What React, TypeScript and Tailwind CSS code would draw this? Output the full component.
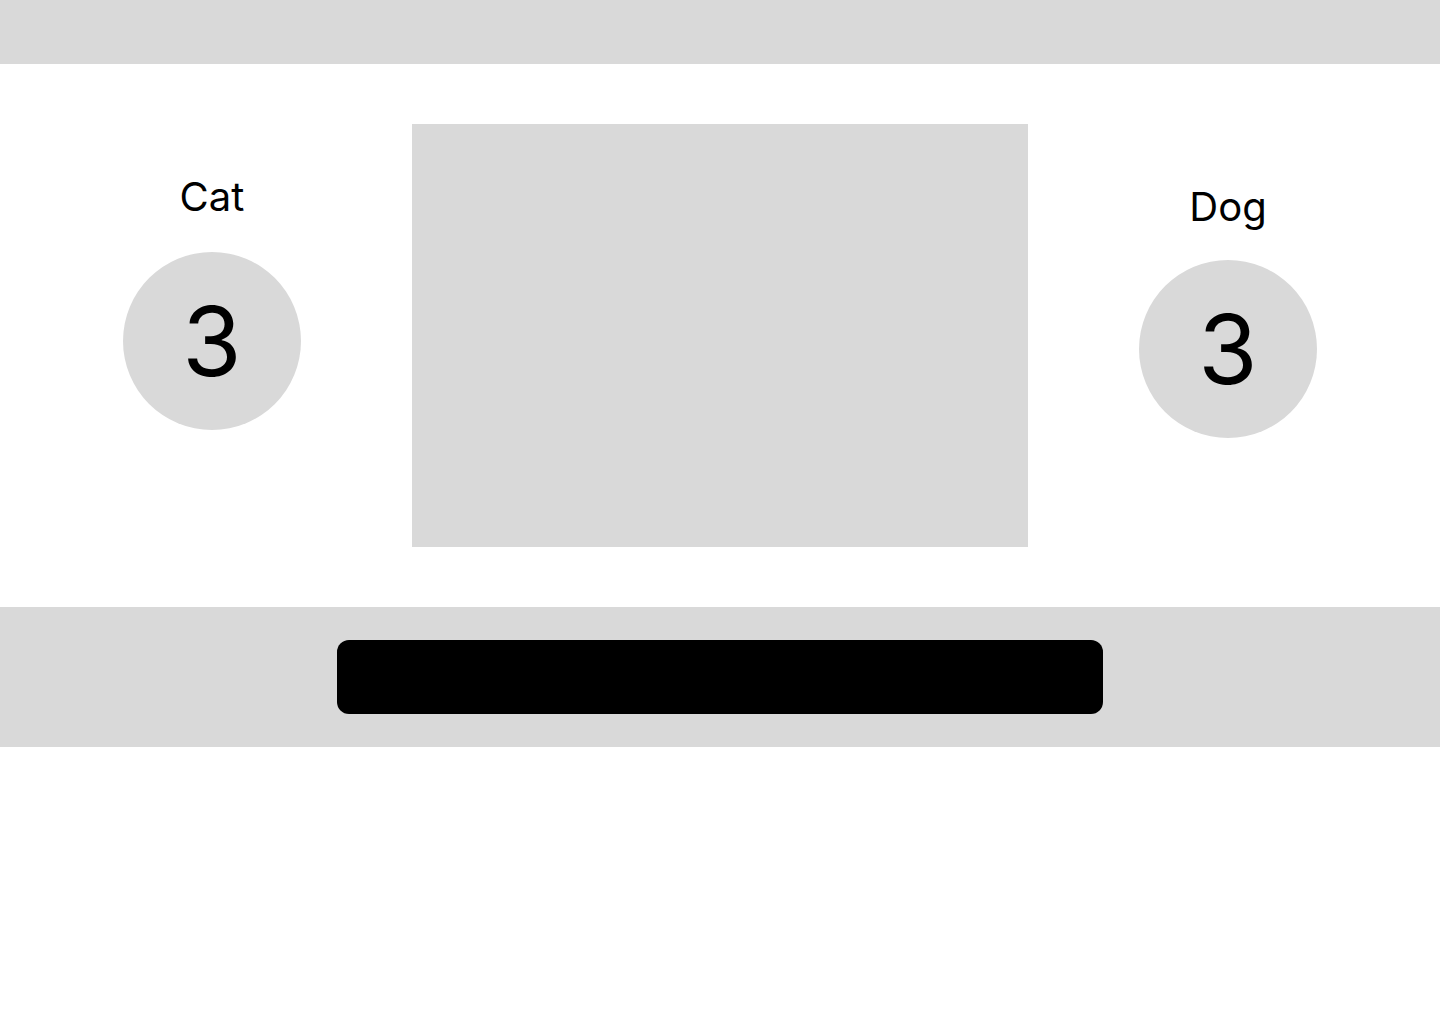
export default function App() {
  return (
    <div className="min-h-screen bg-white font-['Inter',sans-serif] text-black">
      {/* Top bar */}
      <div className="h-16 bg-[#d9d9d9]" />

      {/* Main */}
      <div className="flex justify-between items-start px-[123px] py-[60px]">
        {/* Cat */}
        <div className="flex flex-col items-center w-[178px] mt-[49px]">
          <div className="text-[40px] leading-[48px]">Cat</div>
          <div className="mt-[31px] flex h-[178px] w-[178px] items-center justify-center rounded-full bg-[#d9d9d9]">
            <span className="text-[96px] leading-[96px]">3</span>
          </div>
        </div>

        {/* Center panel */}
        <div className="h-[423px] w-[616px] bg-[#d9d9d9]" />

        {/* Dog */}
        <div className="flex flex-col items-center w-[178px] mt-[59px]">
          <div className="text-[40px] leading-[48px]">Dog</div>
          <div className="mt-[29px] flex h-[178px] w-[178px] items-center justify-center rounded-full bg-[#d9d9d9]">
            <span className="text-[96px] leading-[96px]">3</span>
          </div>
        </div>
      </div>

      {/* Bottom bar */}
      <div className="flex h-[140px] items-start justify-center bg-[#d9d9d9] pt-[33px]">
        <button className="h-[74px] w-[766px] rounded-xl bg-black" />
      </div>
    </div>
  );
}
